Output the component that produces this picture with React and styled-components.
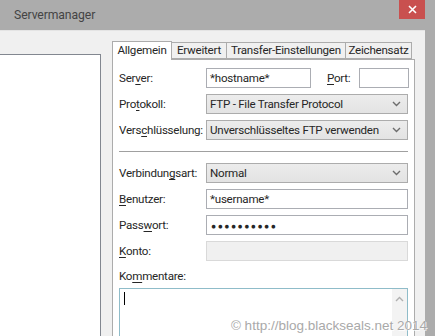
import styled, { createGlobalStyle } from "styled-components";

const GlobalStyle = createGlobalStyle`
  html, body {
    margin: 0;
    padding: 0;
    background: #acacac;
    overflow: hidden;
  }
  * {
    box-sizing: border-box;
  }
`;

const Window = styled.div`
  position: relative;
  width: 435px;
  height: 336px;
  background: #acacac;
  display: flex;
  flex-direction: column;
  overflow: hidden;
  font-family: Roboto, "Noto Sans", sans-serif;
  font-size: 11.6px;
  letter-spacing: -0.25px;
  color: #262626;
`;

const TitleBar = styled.div`
  height: 30px;
  flex: none;
  display: flex;
  justify-content: space-between;
  align-items: flex-start;
  padding-left: 14px;
  padding-right: 10px;
`;

const Title = styled.span`
  margin-top: 8px;
  font-size: 12.2px;
  letter-spacing: -0.1px;
  color: #444;
`;

const CloseButton = styled.div`
  width: 26px;
  height: 19px;
  background: #c9504f;
  display: flex;
  align-items: center;
  justify-content: center;
`;

const Body = styled.div`
  flex: 1;
  margin-right: 10px;
  background: #f0f0f0;
  border-top: 1px solid #e4e4e4;
  display: flex;
  align-items: flex-start;
`;

const TreePanel = styled.div`
  width: 101px;
  height: 300px;
  margin-top: 23px;
  background: #fff;
  border-top: 1px solid #828790;
  border-right: 1px solid #828790;
`;

const TabArea = styled.div`
  margin-left: 11px;
  margin-top: 9px;
  width: 303px;
  display: flex;
  flex-direction: column;
`;

const TabRow = styled.div`
  display: flex;
  align-items: flex-end;
  height: 19px;
`;

const Tab = styled.div`
  width: ${({ w }) => w}px;
  height: ${({ active }) => (active ? "19px" : "17px")};
  margin-bottom: ${({ active }) => (active ? "-1px" : "0")};
  background: ${({ active }) => (active ? "#fff" : "#f0f0f0")};
  border: 1px solid #acacac;
  border-bottom: ${({ active }) => (active ? "none" : "1px solid #acacac")};
  border-left: ${({ first, active }) =>
    first || active ? "1px solid #acacac" : "none"};
  line-height: ${({ active }) => (active ? "17px" : "15px")};
  text-align: center;
  position: relative;
  z-index: ${({ active }) => (active ? 1 : 0)};
  white-space: nowrap;
`;

const TabPanel = styled.div`
  background: #fff;
  border: 1px solid #acacac;
  height: 300px;
  padding: 8px 6px 0 6px;
  display: flex;
  flex-direction: column;
`;

const Row = styled.div`
  display: flex;
  align-items: center;
  height: 20px;
  margin-bottom: ${({ gap }) => gap ?? 6}px;
`;

const Label = styled.span`
  width: 87px;
  flex: none;
  white-space: nowrap;
`;

const Key = styled.u`
  text-decoration-thickness: 1px;
  text-underline-offset: 2px;
`;

const TextInput = styled.div`
  width: ${({ w }) => (w ? `${w}px` : "auto")};
  flex: ${({ w }) => (w ? "none" : "1")};
  height: 20px;
  border: 1px solid ${({ disabled }) => (disabled ? "#d9d9d9" : "#abadb3")};
  background: ${({ disabled }) => (disabled ? "#f0f0f0" : "#fff")};
  padding: 0 3px;
  line-height: 18px;
  white-space: nowrap;
  overflow: hidden;
`;

const PortLabel = styled.span`
  margin-left: 16px;
  width: 32px;
  flex: none;
`;

const Select = styled.div`
  flex: 1;
  height: 20px;
  border: 1px solid #acacac;
  background: linear-gradient(#ececec, #e3e3e3);
  padding: 0 6px 0 3px;
  display: flex;
  align-items: center;
  justify-content: space-between;
  white-space: nowrap;
`;

const Dots = styled.span`
  font-size: 8.5px;
  letter-spacing: 1.5px;
  line-height: 18px;
  margin-left: 1px;
`;

const Separator = styled.div`
  height: 1px;
  background: #a0a0a0;
  margin: 11px 0 11px 0;
`;

const CommentLabel = styled.div`
  margin-top: 7px;
  height: 16px;
  line-height: 16px;
`;

const TextArea = styled.div`
  margin-top: 4px;
  height: 60px;
  border: 1px solid #8fbcc9;
  background: #fff;
  display: flex;
  justify-content: space-between;
`;

const Caret = styled.div`
  width: 1px;
  height: 13px;
  background: #000;
  margin: 3px 0 0 4px;
`;

const ScrollBar = styled.div`
  width: 15px;
  background: #f3f3f3;
  display: flex;
  justify-content: center;
  padding-top: 7px;
`;

const Watermark = styled.div`
  position: absolute;
  right: 8px;
  bottom: 3px;
  font-family: "Liberation Sans", Arial, sans-serif;
  font-size: 13.5px;
  letter-spacing: 0;
  color: #a9a9a9;
  text-shadow: 0 0 1px #fff, 1px 1px 0 rgba(255, 255, 255, 0.8);
  white-space: nowrap;
`;

const Chevron = () => (
  <svg width="9" height="6" viewBox="0 0 9 6">
    <path d="M1 1 L4.5 4.5 L8 1" fill="none" stroke="#6d6d6d" strokeWidth="1.4" />
  </svg>
);

const App = () => {
  return (
    <>
      <GlobalStyle />
      <Window>
        <TitleBar>
          <Title>Servermanager</Title>
          <CloseButton>
            <svg width="9" height="9" viewBox="0 0 9 9">
              <path d="M1 1 L8 8 M8 1 L1 8" stroke="#fff" strokeWidth="1.6" />
            </svg>
          </CloseButton>
        </TitleBar>
        <Body>
          <TreePanel />
          <TabArea>
            <TabRow>
              <Tab active first w={60}>Allgemein</Tab>
              <Tab w={55}>Erweitert</Tab>
              <Tab w={119}>Transfer-Einstellungen</Tab>
              <Tab w={66}>Zeichensatz</Tab>
            </TabRow>
            <TabPanel>
              <Row>
                <Label>
                  Ser<Key>v</Key>er:
                </Label>
                <TextInput w={105}>*hostname*</TextInput>
                <PortLabel>
                  <Key>P</Key>ort:
                </PortLabel>
                <TextInput w={50} />
              </Row>
              <Row>
                <Label>
                  Pro<Key>t</Key>okoll:
                </Label>
                <Select>
                  FTP - File Transfer Protocol
                  <Chevron />
                </Select>
              </Row>
              <Row gap={0}>
                <Label>
                  Vers<Key>c</Key>hlüsselung:
                </Label>
                <Select>
                  Unverschlüsseltes FTP verwenden
                  <Chevron />
                </Select>
              </Row>
              <Separator />
              <Row>
                <Label>
                  Verbindun<Key>g</Key>sart:
                </Label>
                <Select>
                  Normal
                  <Chevron />
                </Select>
              </Row>
              <Row>
                <Label>
                  <Key>B</Key>enutzer:
                </Label>
                <TextInput>*username*</TextInput>
              </Row>
              <Row>
                <Label>
                  Pass<Key>w</Key>ort:
                </Label>
                <TextInput>
                  <Dots>●●●●●●●●●●</Dots>
                </TextInput>
              </Row>
              <Row gap={0}>
                <Label>
                  <Key>K</Key>onto:
                </Label>
                <TextInput disabled />
              </Row>
              <CommentLabel>
                Ko<Key>m</Key>mentare:
              </CommentLabel>
              <TextArea>
                <Caret />
                <ScrollBar>
                  <svg width="9" height="6" viewBox="0 0 9 6">
                    <path d="M1 5 L4.5 1.5 L8 5" fill="none" stroke="#b0b0b0" strokeWidth="1.4" />
                  </svg>
                </ScrollBar>
              </TextArea>
            </TabPanel>
          </TabArea>
        </Body>
        <Watermark>© http://blog.blackseals.net 2014</Watermark>
      </Window>
    </>
  );
};

export default App;
